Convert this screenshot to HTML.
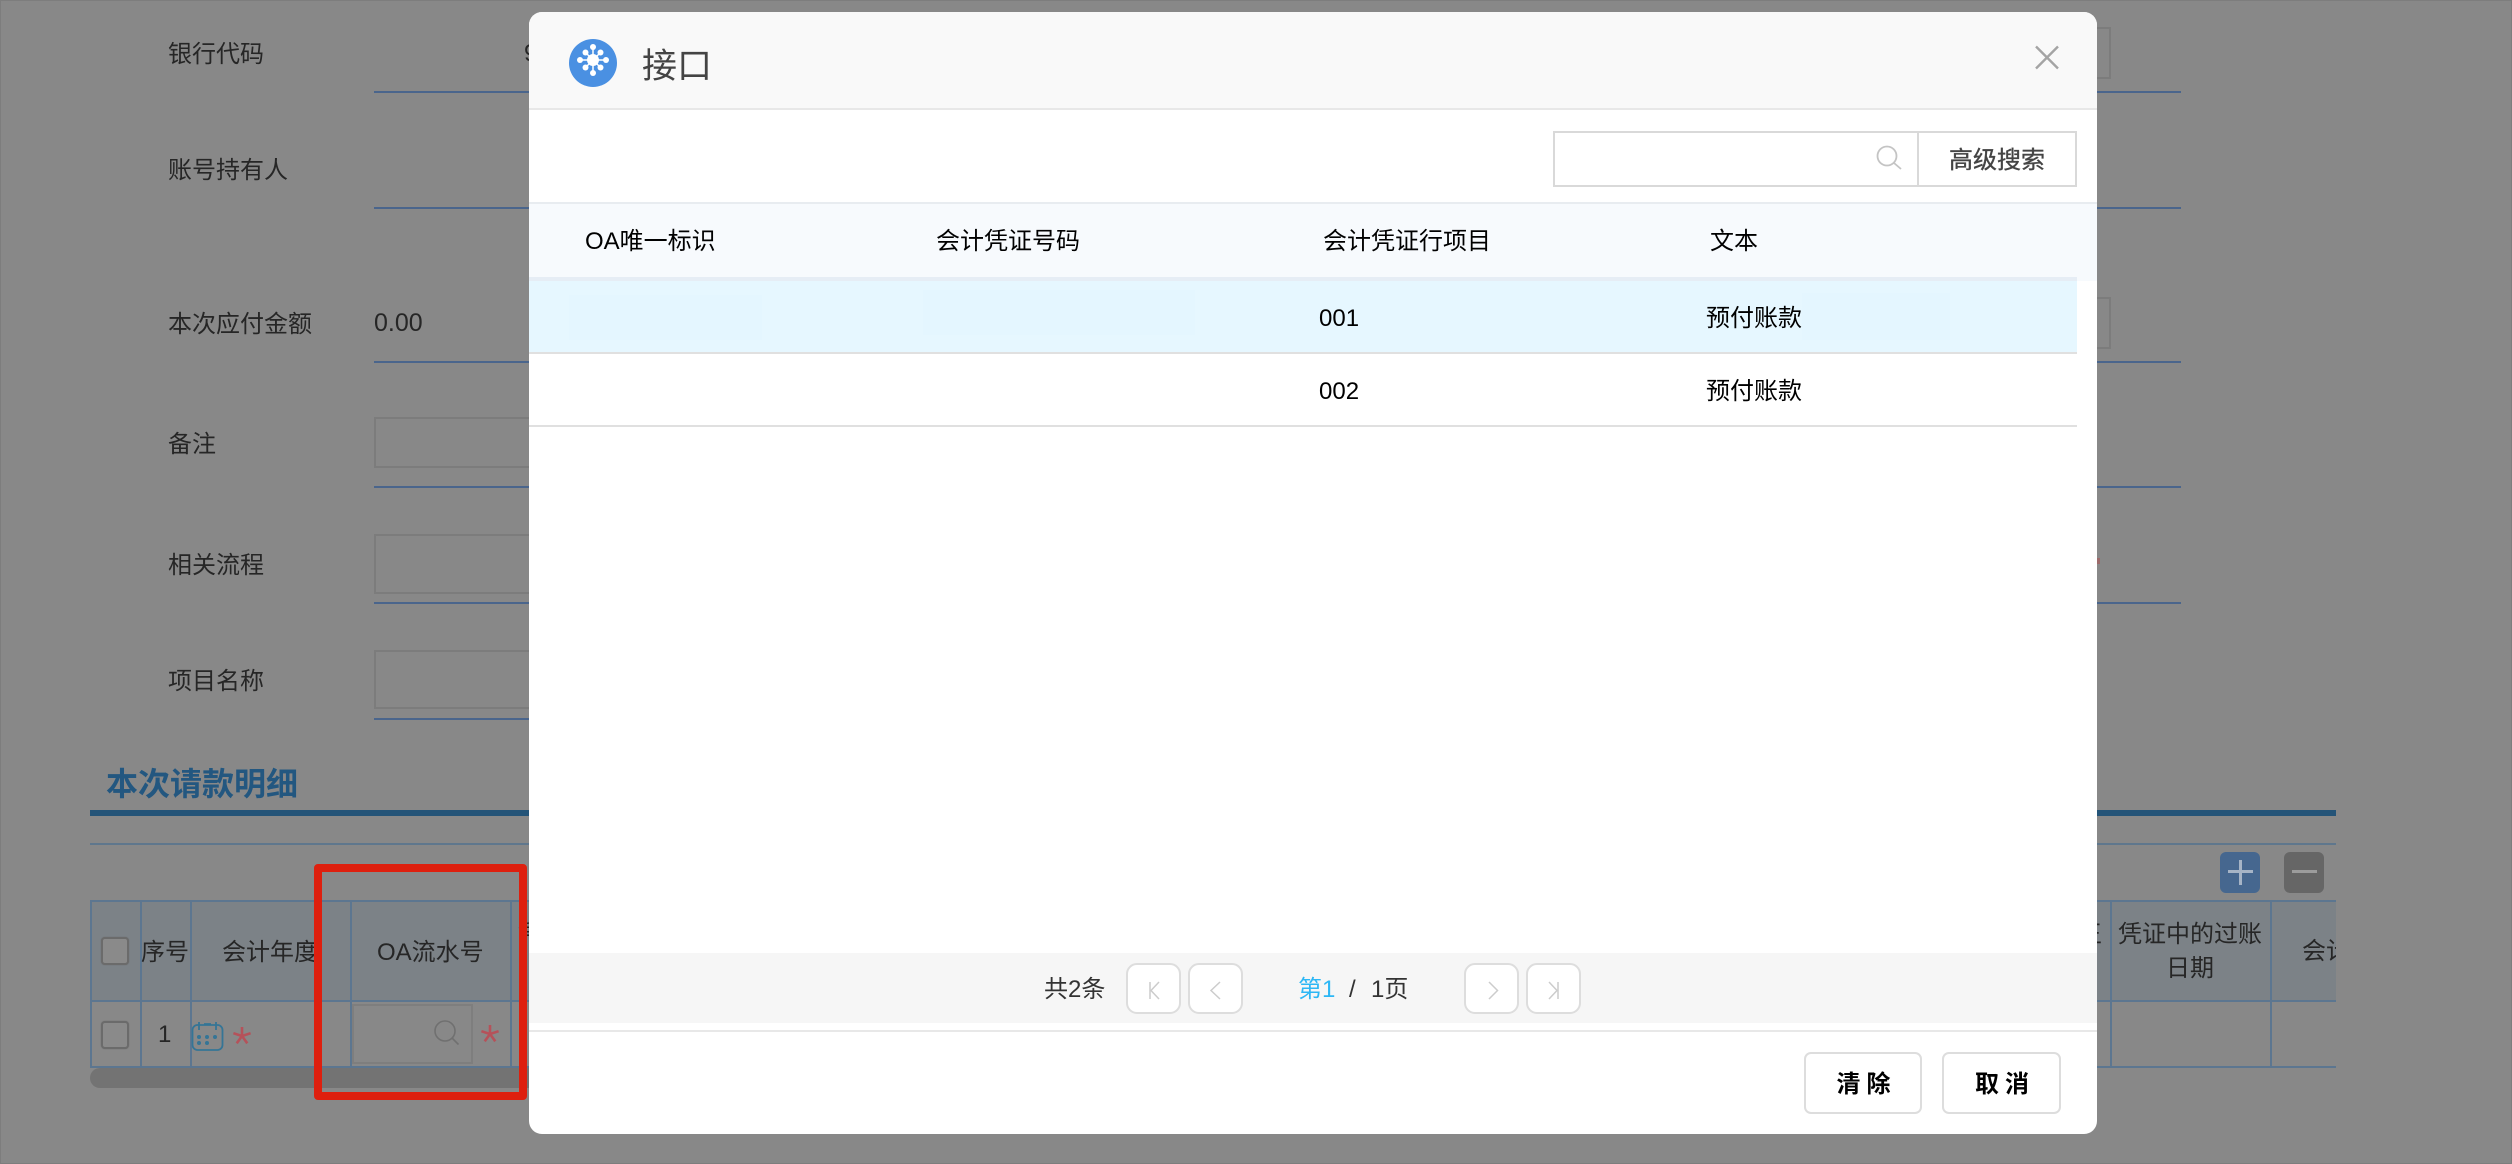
<!DOCTYPE html>
<html lang="zh"><head><meta charset="utf-8"><title>接口</title>
<style>
*{box-sizing:border-box}
html,body{margin:0;padding:0;width:2512px;height:1164px;overflow:hidden;background:#888}
body{position:relative;font-family:"Liberation Sans","Noto Sans CJK SC",sans-serif;font-size:24px;color:#262626}
.a{position:absolute}
.t{position:absolute;white-space:nowrap;line-height:34px;height:34px}
.l{position:absolute;height:2px;background:#4a658c}
.in{position:absolute;border:2px solid #7c7c7c}
.v{position:absolute;width:2px;top:900px;height:168px;background:#5c7690}
.h{position:absolute;left:90px;width:2246px;height:2px;background:#5c7690}
.cb{position:absolute;left:101px;width:28px;height:28px;border:2px solid #6b6b6b;border-radius:4px;background:#8a8a8a;box-shadow:0 0 1px #666}
.pg{position:absolute;top:963px;width:55px;height:51px;border:2px solid #ddd;border-radius:11px;background:#fff}
.fb{position:absolute;top:1052px;height:62px;border:2px solid #ddd;border-radius:7px;background:#fff;color:#000;font-weight:bold;text-align:center;line-height:62px;letter-spacing:6px;padding-left:7px}
#m .t{color:#000}
</style></head><body>
<div class="a" style="left:0;top:0;width:2512px;height:1164px;border:1px solid #7d7d7d"></div>

<div class="t" style="left:168px;top:38px">银行代码</div>
<div class="t" style="left:168px;top:154px">账号持有人</div>
<div class="t" style="left:168px;top:308px">本次应付金额</div>
<div class="t" style="left:168px;top:428px">备注</div>
<div class="t" style="left:168px;top:549px">相关流程</div>
<div class="t" style="left:168px;top:665px">项目名称</div>
<div class="t" style="left:374px;top:306px;font-size:25px">0.00</div>
<div class="t" style="left:524px;top:37px">9</div>

<div class="l" style="left:374px;width:1807px;top:91px"></div>
<div class="l" style="left:374px;width:1807px;top:207px"></div>
<div class="l" style="left:374px;width:1807px;top:361px"></div>
<div class="l" style="left:374px;width:1807px;top:486px"></div>
<div class="l" style="left:374px;width:1807px;top:602px"></div>
<div class="l" style="left:374px;width:200px;top:718px"></div>

<div class="in" style="left:374px;top:417px;width:200px;height:51px"></div>
<div class="in" style="left:374px;top:534px;width:200px;height:60px"></div>
<div class="in" style="left:374px;top:650px;width:200px;height:59px"></div>
<div class="in" style="left:2060px;top:27px;width:51px;height:52px"></div>
<div class="in" style="left:2060px;top:297px;width:51px;height:52px"></div>
<div class="a" style="left:2097px;top:558px;width:3px;height:6px;background:#9c6a6a"></div>

<div class="t" style="left:106px;top:766px;font-size:32px;line-height:36px;height:36px;font-weight:bold;color:#235780">本次请款明细</div>
<div class="a" style="left:90px;top:810px;width:2246px;height:6px;background:#245478"></div>
<div class="a" style="left:90px;top:843px;width:2246px;height:2px;background:#5f778d"></div>

<div class="a" style="left:2220px;top:852px;width:40px;height:41px;background:#46678f;border-radius:6px"></div>
<div class="a" style="left:2228px;top:870px;width:25px;height:3px;background:#a6b4c6"></div>
<div class="a" style="left:2239px;top:860px;width:3px;height:25px;background:#a6b4c6"></div>
<div class="a" style="left:2284px;top:852px;width:40px;height:41px;background:#666;border-radius:6px"></div>
<div class="a" style="left:2292px;top:870px;width:25px;height:3px;background:#9c9c9c"></div>

<div class="a" style="left:90px;top:902px;width:2246px;height:98px;background:#7c8287"></div>
<div class="h" style="top:900px"></div><div class="h" style="top:1000px"></div><div class="h" style="top:1066px"></div>
<div class="v" style="left:90px"></div><div class="v" style="left:140px"></div><div class="v" style="left:190px"></div>
<div class="v" style="left:350px"></div><div class="v" style="left:510px"></div><div class="v" style="left:2110px"></div><div class="v" style="left:2270px"></div>

<div class="cb" style="top:937px"></div><div class="cb" style="top:1021px"></div>
<div class="t" style="left:141px;top:936px">序号</div>
<div class="t" style="left:222px;top:936px">会计年度</div>
<div class="t" style="left:377px;top:936px">OA流水号</div>
<div class="t" style="left:158px;top:1018px">1</div>
<div class="t" style="left:518px;top:917px">凭证</div>
<div class="t" style="left:2118px;top:918px">凭证中的过账</div>
<div class="t" style="left:2166px;top:952px">日期</div>
<div class="t" style="left:2078px;top:918px">王</div>
<div class="a" style="left:2300px;top:930px;width:36px;height:44px;overflow:hidden"><div class="t" style="left:2px;top:5px">会计</div></div>

<div class="in" style="left:352px;top:1004px;width:121px;height:60px;border-color:#7e7e7e"></div>
<div class="a" style="left:90px;top:1068px;width:500px;height:20px;border-radius:10px;background:#737373"></div>

<svg class="a" style="left:0;top:0" width="2512" height="1164" fill="none">
<g stroke="#357596" stroke-width="1.800"><rect x="192.500" y="1025" width="30" height="25" rx="5"/><path d="M199 1022v8M216 1022v8M204 1024h7"/></g>
<g fill="#357596"><circle cx="199" cy="1037" r="2"/><circle cx="207" cy="1037" r="2"/><circle cx="215" cy="1037" r="2"/><circle cx="199" cy="1043" r="2"/><circle cx="207" cy="1043" r="2"/></g>
<g stroke="#b5525a" stroke-width="2.600"><path d="M242 1027v9M242 1036l8.600-2.800M242 1036l5.300 7.300M242 1036l-5.300 7.300M242 1036l-8.600-2.800"/><path d="M490 1025v9M490 1034l8.600-2.800M490 1034l5.300 7.300M490 1034l-5.300 7.300M490 1034l-8.600-2.800"/></g>
<g stroke="#707070" stroke-width="1.600"><circle cx="445" cy="1031" r="10"/><path d="M452 1038l6.500 6.500"/></g>
</svg>

<div class="a" style="left:314px;top:864px;width:213px;height:236px;border:8px solid #de1f0e;border-radius:4px"></div>

<div id="m" class="a" style="left:529px;top:12px;width:1568px;height:1122px;background:#fff;border-radius:13px;overflow:hidden">
 <div class="a" style="left:0;top:0;width:1568px;height:96px;background:#f9f9f9;border-bottom:0"></div>
 <div class="a" style="left:0;top:96px;width:1568px;height:2px;background:#e8e8e8"></div>
 <div class="t" style="left:113px;top:31px;font-size:35px;line-height:48px;height:48px"><span style="color:#444">接口</span></div>

 <div class="a" style="left:0;top:190px;width:1568px;height:2px;background:#e8ecf0"></div>
 <div class="a" style="left:0;top:192px;width:1568px;height:77px;background:#f7fafd"></div>
 <div class="a" style="left:0;top:265px;width:1548px;height:4px;background:#e6edf5"></div>
 <div class="a" style="left:0;top:269px;width:1548px;height:71px;background:#e6f7ff"></div>
 <div class="a" style="left:40px;top:283px;width:193px;height:45px;background:#e4f6ff"></div>
 <div class="a" style="left:394px;top:278px;width:272px;height:45px;background:#e4f6ff"></div>
 <div class="a" style="left:1273px;top:281px;width:148px;height:47px;background:#e4f6ff"></div>
 <div class="a" style="left:0;top:340px;width:1548px;height:2px;background:#e0e0e0"></div>
 <div class="a" style="left:0;top:413px;width:1548px;height:2px;background:#e0e0e0"></div>

 <div class="a" style="left:1024px;top:119px;width:524px;height:56px;border:2px solid #d9d9d9"></div>
 <div class="a" style="left:1388px;top:119px;width:2px;height:56px;background:#d9d9d9"></div>
 <div class="t" style="left:1420px;top:132px"><span style="color:#444;-webkit-text-stroke:.35px #444">高级搜索</span></div>

 <div class="t" style="left:56px;top:213px">OA唯一标识</div>
 <div class="t" style="left:407px;top:213px">会计凭证号码</div>
 <div class="t" style="left:794px;top:213px">会计凭证行项目</div>
 <div class="t" style="left:1181px;top:213px">文本</div>
 <div class="t" style="left:790px;top:290px">001</div>
 <div class="t" style="left:1177px;top:290px">预付账款</div>
 <div class="t" style="left:790px;top:363px">002</div>
 <div class="t" style="left:1177px;top:363px">预付账款</div>

 <div class="a" style="left:0;top:941px;width:1568px;height:70px;background:#f6f6f6"></div>
 <div class="a" style="left:0;top:1018px;width:1568px;height:2px;background:#e8e8e8"></div>
</div>

<div class="t" style="left:1044px;top:973px;color:#333">共2条</div>
<div class="pg" style="left:1126px"></div><div class="pg" style="left:1188px"></div>
<div class="pg" style="left:1464px"></div><div class="pg" style="left:1526px"></div>
<div class="t" style="left:1298px;top:973px;color:#2db7f5">第1</div>
<div class="t" style="left:1349px;top:973px;color:#333">/</div>
<div class="t" style="left:1371px;top:973px;color:#333">1页</div>

<div class="fb" style="left:1804px;width:118px">清除</div>
<div class="fb" style="left:1942px;width:119px">取消</div>

<svg class="a" style="left:0;top:0" width="2512" height="1164" fill="none">
<circle cx="593" cy="63" r="24" fill="#4a90e2"/>
<g stroke="#fff" stroke-width="1.500"><path d="M593 60v-13M593 60v13M593 60h-13M593 60h13M593 60l-7.500-7.500M593 60l7.500-7.500M593 60l-7.500 7.500M593 60l7.500 7.500"/></g>
<g fill="#fff"><circle cx="593" cy="60" r="6"/><circle cx="593" cy="47" r="3"/><circle cx="593" cy="73" r="3"/><circle cx="580" cy="60" r="3"/><circle cx="606" cy="60" r="3"/><circle cx="585.500" cy="52.500" r="3"/><circle cx="600.500" cy="52.500" r="3"/><circle cx="585.500" cy="67.500" r="3"/><circle cx="600.500" cy="67.500" r="3"/></g>
<path d="M2036 46.500L2058 68.500M2058 46.500L2036 68.500" stroke="#a4a4a4" stroke-width="2.400"/>
<g stroke="#c4c4c4" stroke-width="1.800"><circle cx="1887" cy="156" r="9.500"/><path d="M1894 163l7 6"/></g>
<g stroke="#ccc" stroke-width="1.500">
<path d="M1150 982v17M1159 982l-8 8.500 8 8.500"/>
<path d="M1220 982l-9 8.500 9 8.500"/>
<path d="M1489 982l8.500 8.500-8.500 8.500"/>
<path d="M1558 982v17M1549 982l8 8.500-8 8.500"/>
</g>
</svg>
</body></html>
